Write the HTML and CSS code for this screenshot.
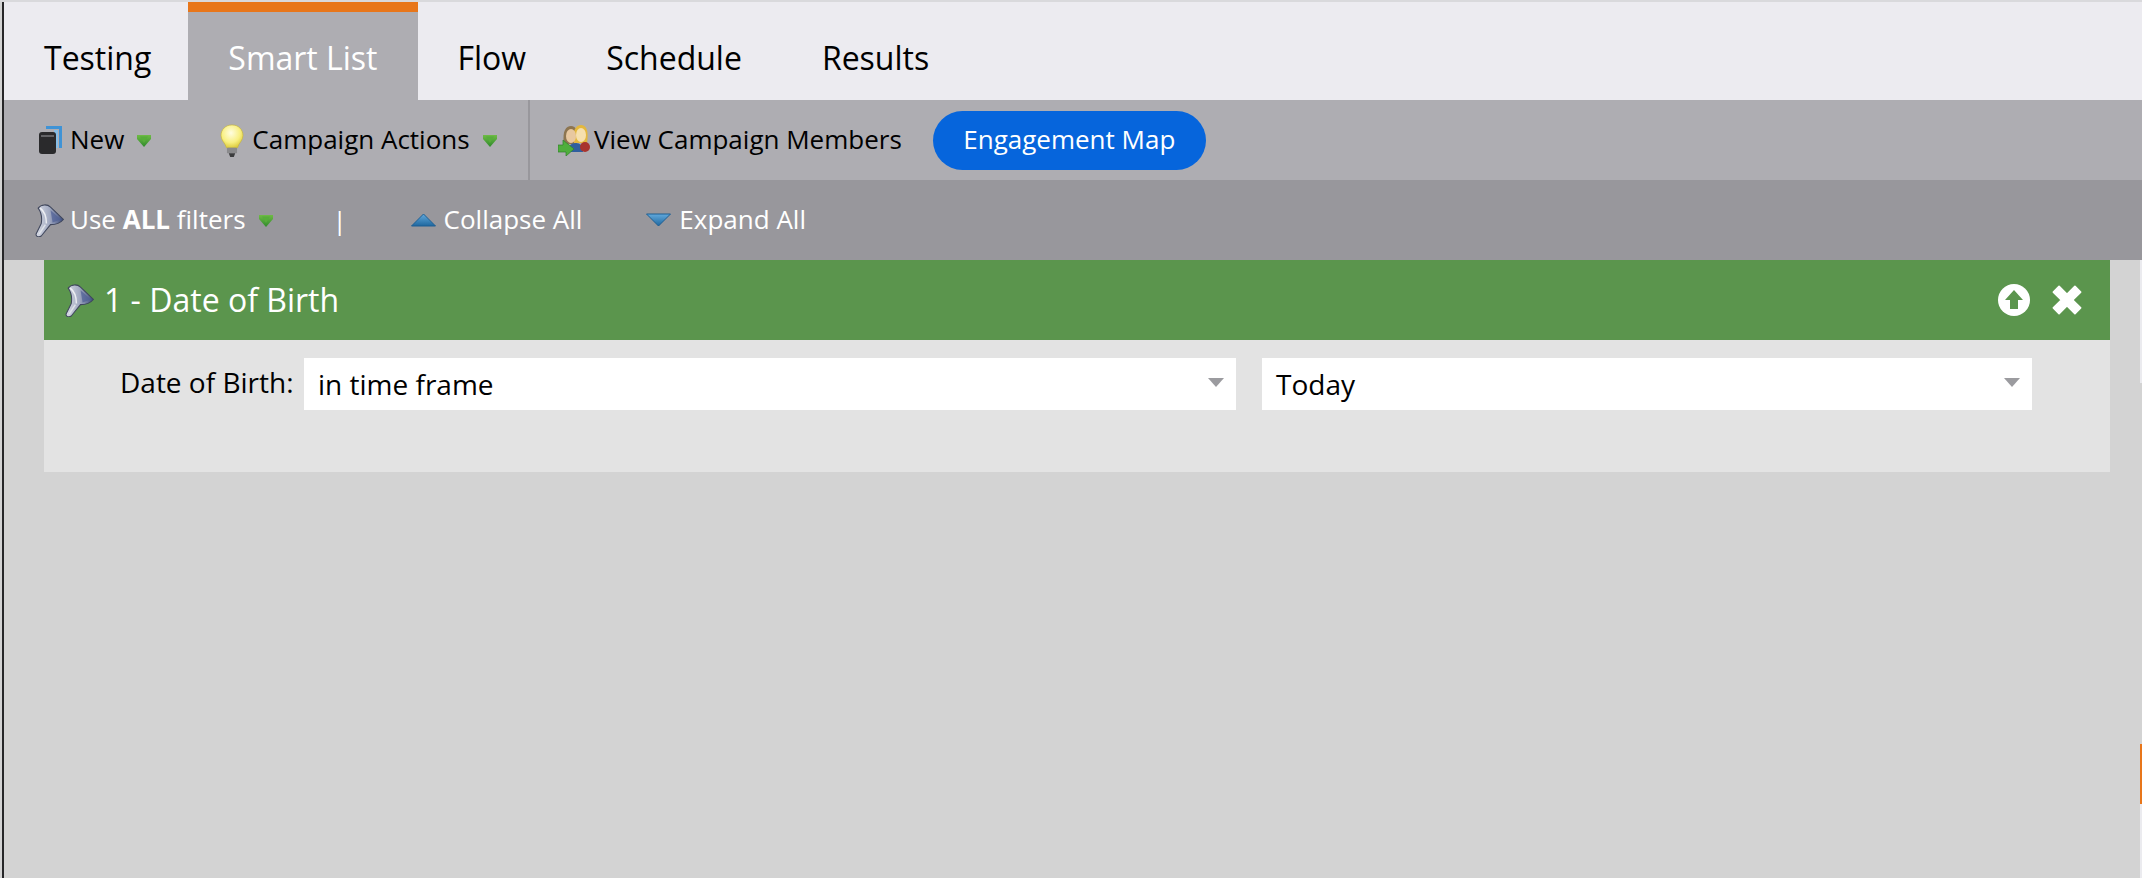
FILE: index.html
```html
<!DOCTYPE html>
<html lang="en">
<head>
<meta charset="utf-8">
<title>Smart List</title>
<link rel="stylesheet" href="styles.css">
</head>
<body>
<svg class="defs" width="0" height="0" aria-hidden="true">
  <defs>
    <linearGradient id="gTri" x1="0" y1="0" x2="0" y2="1"><stop offset="0" stop-color="#6fbb45"/><stop offset="1" stop-color="#2f8a2c"/></linearGradient>
    <linearGradient id="gBlue" x1="0" y1="0" x2="0" y2="1"><stop offset="0" stop-color="#62a9dc"/><stop offset="1" stop-color="#1f679f"/></linearGradient>
    <linearGradient id="gFunnel" x1="0" y1="0" x2="1" y2="0"><stop offset="0" stop-color="#d8dbe4"/><stop offset=".5" stop-color="#a0a8c0"/><stop offset="1" stop-color="#3a4a7c"/></linearGradient>
    <radialGradient id="gBulb" cx=".45" cy=".35" r=".7"><stop offset="0" stop-color="#fffde0"/><stop offset=".6" stop-color="#f8ef80"/><stop offset="1" stop-color="#d8c530"/></radialGradient>
    <symbol id="funnel" viewBox="0 0 28 32">
      <path d="M3 4 C6 0 12 0 15 3 L27.500 15 C25 18 20 20 15 20 L6 31 C4 32.500 .5 32 1 29 L6 19 C7 13 6 8 3 4Z" fill="url(#gFunnel)" stroke="#3f465c" stroke-width="1"/>
      <path d="M5 4 C9 7 11 12 11 19" fill="none" stroke="#fff" stroke-width="1.500" opacity=".75"/>
      <path d="M4 29 L10 20" fill="none" stroke="#dfe3ea" stroke-width="1.500"/>
      <path d="M15 6 L25 15 L17 18Z" fill="#4f5f96" opacity=".7"/>
    </symbol>
    <symbol id="tri" viewBox="0 0 14 13"><path d="M0 1 H14 V5 L7 13 L0 5Z" fill="url(#gTri)"/><path d="M3 2.500 H11 L7 9Z" fill="#57ad3a"/></symbol>
  </defs>
</svg>
<div class="topline"></div>
<div class="app">
  <nav class="tabs">
    <a class="tab">Testing</a>
    <a class="tab active">Smart List</a>
    <a class="tab">Flow</a>
    <a class="tab">Schedule</a>
    <a class="tab">Results</a>
  </nav>
  <div class="bar bar-actions">
    <div class="group group-left">
      <span class="item item-new">
        <svg class="ic-book" viewBox="0 0 23 28"><path d="M7 1.500 H21.500 V22" fill="none" stroke="#3f93d6" stroke-width="3"/><path d="M15 4 H19 V22 H15Z" fill="#86bde6"/><rect x="0" y="6" width="17" height="22" rx="3" fill="#2a2a2c"/><path d="M2 10 H15" stroke="#77777a" stroke-width="1.500"/></svg>
        <span class="label">New</span>
        <svg class="ic-tri"><use href="#tri"/></svg>
      </span>
      <span class="item item-camp">
        <svg class="ic-bulb" viewBox="0 0 25 36"><path d="M12.500 1 C19.500 1 24.500 6 24.500 12.500 C24.500 18 20 20.500 18.500 26 H6.500 C5 20.500 .5 18 .5 12.500 C.5 6 5.500 1 12.500 1Z" fill="url(#gBulb)" stroke="#c6b53c" stroke-width=".7"/><rect x="7" y="26" width="11" height="6" rx="1" fill="#8a8a8c"/><path d="M9 32 H16 L14.500 36 H10.500Z" fill="#3c3c3e"/></svg>
        <span class="label">Campaign Actions</span>
        <svg class="ic-tri"><use href="#tri"/></svg>
      </span>
    </div>
    <div class="group group-right">
      <span class="item item-view">
        <svg class="ic-members" viewBox="0 0 32 31">
          <path d="M6 19 C4 6 8 1 13 1 C18 1 21 6 19 19Z" fill="#8d7550"/>
          <path d="M16 18 C14 5 18 0 23 0 C28 0 31 5 29 18Z" fill="#e3b83f"/>
          <ellipse cx="13" cy="11" rx="5" ry="7" fill="#e8c8a0"/>
          <ellipse cx="23" cy="10" rx="5" ry="7" fill="#f6e0ae"/>
          <path d="M10 27 C10 21 13 18 18 18 C22 18 25 21 25 27Z" fill="#2f5f9e"/>
          <circle cx="27" cy="22" r="5" fill="#a8342e"/>
          <path d="M0 20 H5 V15 L16 24 L8 31 V27 H0Z" fill="#4fae3c" stroke="#2f7f2a" stroke-width=".7"/>
        </svg>
        <span class="label">View Campaign Members</span>
      </span>
      <button class="pill" type="button">Engagement Map</button>
    </div>
  </div>
  <div class="bar bar-filters">
    <span class="item item-use">
      <svg class="ic-funnel"><use href="#funnel"/></svg>
      <span class="label">Use <b>ALL</b> filters</span>
      <svg class="ic-tri"><use href="#tri"/></svg>
    </span>
    <span class="pipe">|</span>
    <span class="item item-collapse">
      <svg class="ic-arrow" viewBox="0 0 25 14"><path d="M12.500 1 L24.500 13 H.5Z" fill="url(#gBlue)" stroke="#1d5f93" stroke-width="1" stroke-linejoin="round"/></svg>
      <span class="label">Collapse All</span>
    </span>
    <span class="item item-expand">
      <svg class="ic-arrow" viewBox="0 0 25 14"><path d="M.5 1 H24.500 L12.500 13Z" fill="url(#gBlue)" stroke="#1d5f93" stroke-width="1" stroke-linejoin="round"/></svg>
      <span class="label">Expand All</span>
    </span>
  </div>
  <div class="canvas">
    <main class="content">
      <section class="filter">
        <header class="filter-head">
          <div class="filter-title">
            <svg class="ic-funnel"><use href="#funnel"/></svg>
            <span class="title-text">1 - Date of Birth</span>
          </div>
          <div class="filter-tools">
            <svg class="ic-up" viewBox="0 0 32 32"><circle cx="16" cy="16" r="16" fill="#fff"/><path d="M16 6 L25 16 H20 V25 H12 V16 H7Z" fill="#5b954d"/></svg>
            <svg class="ic-x" viewBox="0 0 30 30"><path d="M3 8 L8 3 L15 10 L22 3 L27 8 L20 15 L27 22 L22 27 L15 20 L8 27 L3 22 L10 15Z" fill="#fff" stroke="#fff" stroke-width="1.500" stroke-linejoin="round"/></svg>
          </div>
        </header>
        <div class="filter-body">
          <span class="field-label">Date of Birth:</span>
          <div class="select select-op">in time frame<i class="caret"></i></div>
          <div class="select select-val">Today<i class="caret"></i></div>
        </div>
      </section>
    </main>
    <aside class="rail">
      <div class="rail-a"></div>
      <div class="rail-b"></div>
      <div class="rail-c"></div>
      <div class="rail-d"></div>
    </aside>
  </div>
</div>
</body>
</html>
```

FILE: styles.css
```css
* { box-sizing: border-box; }
html, body { margin: 0; height: 100%; }
body {
  width: 2142px;
  height: 878px;
  overflow: hidden;
  background: #d3d3d3;
  font-family: "Open Sans", "Noto Sans", sans-serif;
  color: #000;
  display: flex;
  flex-direction: column;
}
.defs { position: absolute; }
.topline { height: 2px; background: #d9d9dc; flex: none; }
.app {
  flex: 1;
  margin-left: 2px;
  border-left: 2px solid #262628;
  display: flex;
  flex-direction: column;
  min-height: 0;
}
.tabs {
  height: 98px;
  background: #ecebf0;
  display: flex;
  flex: none;
}
.tab {
  padding: 18px 40px 0;
  font-size: 32px;
  line-height: 56px;
  border-top: 10px solid transparent;
}
.tab:first-child { padding-right: 37px; }
.tab.active {
  background: #aeadb2;
  color: #fff;
  border-top-color: #e8761a;
}
.bar { height: 80px; display: flex; align-items: center; flex: none; }
.bar-actions { background: #aeadb2; font-size: 26px; }
.bar-filters { background: #98979c; color: #fff; font-size: 26px; }
.group { display: flex; align-items: center; height: 100%; }
.group-left { width: 526px; border-right: 2px solid #98979c; padding-left: 35px; }
.group-right { padding-left: 28px; }
.item { display: flex; align-items: center; white-space: nowrap; }
.label { line-height: 36px; position: relative; top: -1px; }
.ic-book { width: 23px; height: 28px; margin-right: 8px; }
.ic-tri { width: 14px; height: 13px; margin-left: 13px; }
.item-camp { margin-left: 69px; }
.ic-bulb { width: 24px; height: 33px; margin-right: 8px; }
.ic-members { width: 32px; height: 31px; margin-right: 4px; }
.pill {
  margin-left: 31px;
  width: 273px;
  height: 59px;
  border: 0;
  border-radius: 30px;
  background: #0665dc;
  color: #fff;
  font: inherit;
  padding: 0 0 2px;
}
.bar-filters { padding-left: 31px; }
.ic-funnel { width: 29px; height: 33px; margin-right: 6px; flex: none; }
.pipe { margin-left: 60px; width: 12px; }
.item-collapse { margin-left: 66px; }
.item-expand { margin-left: 64px; }
.ic-arrow { width: 25px; height: 14px; margin-right: 8px; }
.canvas { flex: 1; display: flex; min-height: 0; }
.content { flex: 1; padding-left: 40px; padding-right: 30px; }
.filter-head {
  height: 80px;
  background: #5b954d;
  color: #fff;
  display: flex;
  align-items: center;
  justify-content: space-between;
  padding: 0 26px 0 21px;
}
.filter-title { display: flex; align-items: center; font-size: 32px; }
.filter-title .ic-funnel { margin-right: 10px; }
.title-text { position: relative; top: -1px; }
.filter-tools { display: flex; align-items: center; gap: 20px; }
.ic-up { width: 32px; height: 32px; }
.ic-x { width: 34px; height: 34px; }
.filter-body {
  height: 132px;
  background: #e3e3e3;
  display: flex;
  align-items: flex-start;
  padding: 18px 0 0 76px;
  font-size: 28px;
}
.field-label { line-height: 48px; width: 184px; flex: none; white-space: nowrap; }
.select {
  position: relative;
  height: 52px;
  background: #fff;
  line-height: 52px;
  padding-left: 14px;
  flex: none;
}
.select-op { width: 932px; margin-right: 26px; }
.select-val { width: 770px; }
.caret {
  position: absolute;
  right: 12px;
  top: 20px;
  width: 0;
  height: 0;
  border-left: 8px solid transparent;
  border-right: 8px solid transparent;
  border-top: 9px solid #9b9b9f;
}
.rail { width: 2px; flex: none; display: flex; flex-direction: column; }
.rail-a { height: 123px; background: #ebebef; }
.rail-b { height: 361px; background: #d3d3d3; }
.rail-c { height: 60px; background: #e8761a; }
.rail-d { flex: 1; background: #ebebef; }
```
